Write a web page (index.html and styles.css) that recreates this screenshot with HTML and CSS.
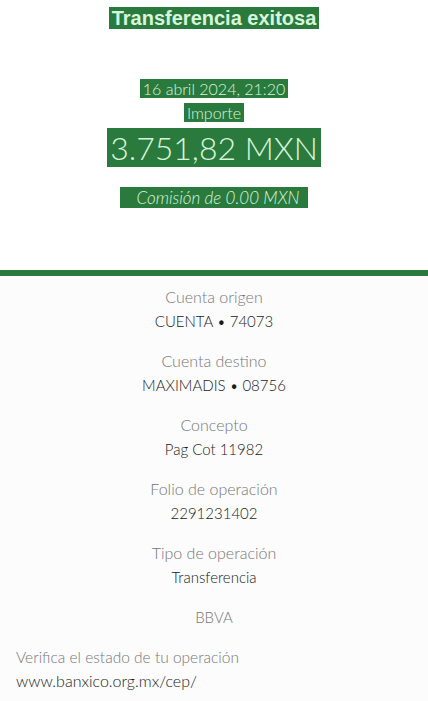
FILE: index.html
```html
<!DOCTYPE html>
<html lang="es">

<head>
    <meta charset="UTF-8">
    <meta name="viewport" content="width=device-width, initial-scale=1.0">
    <title>Transferencia exitosa</title>
    <link rel="stylesheet" href="styles.css">
</head>

<body>
    <div id="receipt-header">
        <h1><span class="mark">Transferencia exitosa</span></h1>
        <p class="date"><span class="mark">16 abril 2024, 21:20</span></p>
        <p class="label"><span class="mark">Importe</span></p>
        <p class="amount"><span class="mark">3.751,82 MXN</span></p>
        <p class="fee"><span class="mark">Comisión de 0.00 MXN</span></p>
    </div>

    <div id="receipt-body">
        <div class="field">
            <div class="field-name">Cuenta origen</div>
            <div class="field-value">CUENTA • 74073</div>
        </div>
        <div class="field">
            <div class="field-name">Cuenta destino</div>
            <div class="field-value">MAXIMADIS • 08756</div>
        </div>
        <div class="field">
            <div class="field-name">Concepto</div>
            <div class="field-value">Pag Cot 11982</div>
        </div>
        <div class="field">
            <div class="field-name">Folio de operación</div>
            <div class="field-value">2291231402</div>
        </div>
        <div class="field">
            <div class="field-name">Tipo de operación</div>
            <div class="field-value">Transferencia</div>
        </div>
        <div class="bank">BBVA</div>

        <div class="verify">
            <div class="field-name">Verifica el estado de tu operación</div>
            <div class="field-value">www.banxico.org.mx/cep/</div>
        </div>
    </div>
</body>
</html>
```

FILE: styles.css
```css
body {
    font-family: 'Lato', sans-serif;
    background-color: #fcfcfd;
    margin: 0;
    padding: 0;
}

#receipt-header {
    background-color: #fff;
    text-align: center;
    height: 276px;
    padding-top: 3px;
    box-sizing: border-box;
    border-bottom: 6px solid #2a7a3e;
}

#receipt-header p,
#receipt-header h1 {
    margin: 0;
}

.mark {
    background-color: #2a7a3e;
    color: #d8f5dc;
    padding: 0 3px;
}

h1 {
    font-family: 'Liberation Sans', Arial, sans-serif;
    font-size: 20px;
    font-weight: bold;
    line-height: 30px;
}

.date {
    font-size: 16px;
    font-weight: 300;
    line-height: 22px;
    margin-top: 45px !important;
}

.label {
    font-size: 16px;
    font-weight: 300;
    line-height: 22px;
    margin-top: 2px !important;
}

.amount {
    font-size: 32px;
    font-weight: 300;
    line-height: 48px;
}

.fee {
    font-size: 17px;
    font-style: italic;
    font-weight: 300;
    line-height: 20px;
    margin-top: 16px !important;
}

.fee .mark {
    padding: 0 8px 0 16px;
}

#receipt-body {
    padding-top: 9px;
}

.field {
    text-align: center;
    height: 64px;
}

.field-name {
    color: #777;
    font-size: 16px;
    font-weight: 300;
    line-height: 24px;
}

.field-value {
    color: #1a1a1a;
    font-size: 15px;
    font-weight: 300;
    line-height: 24px;
}

.bank {
    text-align: center;
    color: #777;
    font-size: 15px;
    font-weight: 300;
    line-height: 24px;
    height: 40px;
}

.verify {
    padding: 0 16px;
}

.verify .field-name {
    font-size: 15.5px;
}

.verify .field-value {
    font-size: 16px;
}
```
